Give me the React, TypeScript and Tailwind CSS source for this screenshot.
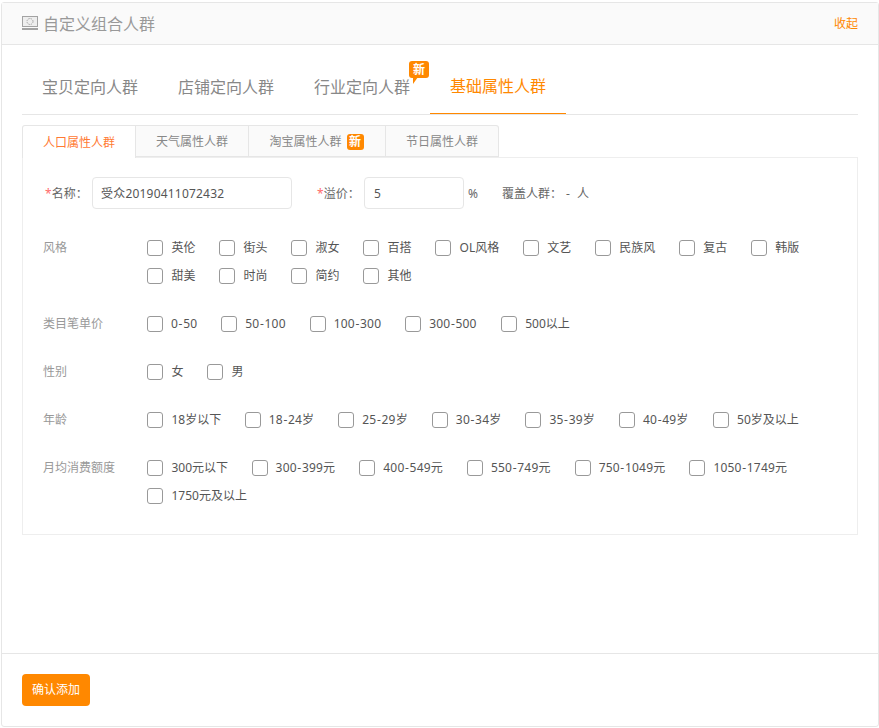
const mainTabs = ['宝贝定向人群', '店铺定向人群', '行业定向人群', '基础属性人群'];

const groups = [
  { label: '风格', mt: 'mt-[25px]', options: ['英伦', '街头', '淑女', '百搭', 'OL风格', '文艺', '民族风', '复古', '韩版', '甜美', '时尚', '简约', '其他'] },
  { label: '类目笔单价', mt: 'mt-[20px]', options: ['0-50', '50-100', '100-300', '300-500', '500以上'] },
  { label: '性别', mt: 'mt-[20px]', options: ['女', '男'] },
  { label: '年龄', mt: 'mt-[20px]', options: ['18岁以下', '18-24岁', '25-29岁', '30-34岁', '35-39岁', '40-49岁', '50岁及以上'] },
  { label: '月均消费额度', mt: 'mt-[20px]', options: ['300元以下', '300-399元', '400-549元', '550-749元', '750-1049元', '1050-1749元', '1750元及以上'] },
];

function Option({ text }: { text: string }) {
  const parts = text.split('-');
  return (
    <label className="flex items-center h-[28px] mr-[24px]">
      <span className="w-[16px] h-[16px] rounded-[3px] border border-[#999] bg-white" />
      {parts.length > 1 ? (
        <span className="ml-[8px] text-[12px] text-[#555] tracking-[0.2px]">
          {parts[0]}<span className="px-[0.5px]">-</span>{parts[1]}
        </span>
      ) : (
        <span className="ml-[8.5px] mr-[-0.5px] text-[12px] text-[#555]">{text}</span>
      )}
    </label>
  );
}

export default function App() {
  return (
    <div className="w-[879px] h-[728px] pt-[2px] pl-[1px] bg-white text-[#666]" style={{ fontFamily: '"Noto Sans", "Noto Sans CJK SC", sans-serif' }}>
      <div className="w-[878px] h-[725px] flex flex-col border border-[#e6e6e6] rounded-[3px]">
        <div className="h-[41px] flex items-center justify-between px-[20px] bg-[#fafafa] border-b border-[#e6e6e6] box-content">
          <div className="flex items-center">
            <svg width="17" height="17" viewBox="0 0 17 17" fill="none" stroke="#a3a3a3" strokeWidth="1">
              <rect x="0.5" y="1.5" width="15" height="10" fill="#eeeeee" />
              <circle cx="8" cy="6.5" r="3" strokeDasharray="1.4 1" />
              <path d="M0 14h16" strokeWidth="2" />
            </svg>
            <span className="ml-[4px] text-[16px] text-[#999]">自定义组合人群</span>
          </div>
          <span className="text-[12px] text-[#ff8800]">收起</span>
        </div>

        <div className="flex-1 px-[20px]">
          <div className="h-[70px] flex border-b border-[#e6e6e6]">
            {mainTabs.map((t, i) => (
              <div key={t} className={`relative w-[136px] pt-[14px] flex items-center justify-center text-[16px] ${i === 3 ? 'text-[#ff8800] border-b border-[#ff8800]' : 'text-[#888]'}`}>
                {t}
                {i === 2 && (
                  <span className="absolute top-[16px] right-[1px] flex">
                    <span className="w-[20px] h-[17px] rounded-[3px] bg-[#ff8800] text-white text-[12px] font-bold leading-[17px] text-center">新</span>
                    <span className="absolute left-[4px] top-[16px] w-0 h-0 border-t-[7px] border-t-[#ff8800] border-r-[5px] border-r-transparent" />
                  </span>
                )}
              </div>
            ))}
          </div>

          <div className="mt-[10px] flex h-[33px] relative z-10">
            <div className="w-[114px] h-[33px] pt-px flex items-center justify-center text-[12px] text-[#ff7a33] bg-white border border-b-0 border-[#e6e6e6] rounded-tl-[3px]">人口属性人群</div>
            <div className="w-[113px] h-[32px] pt-px flex items-center justify-center text-[12px] text-[#888] bg-[#fafafa] border-t border-r border-b border-[#e6e6e6]">天气属性人群</div>
            <div className="w-[137px] h-[32px] pt-px pr-px flex items-center justify-center text-[12px] text-[#888] bg-[#fafafa] border-t border-r border-b border-[#e6e6e6]">
              淘宝属性人群
              <span className="ml-[5px] w-[17px] h-[16px] rounded-[3px] bg-[#ff8800] text-white text-[12px] font-bold leading-[16px] text-center">新</span>
            </div>
            <div className="w-[113px] h-[32px] pt-px flex items-center justify-center text-[12px] text-[#888] bg-[#fafafa] border-t border-r border-b border-[#e6e6e6] rounded-tr-[3px]">节日属性人群</div>
          </div>

          <div className="h-[378px] -mt-px border border-[#eeeeee] px-[20px] pt-[19px]">
            <div className="flex items-center h-[32px] text-[12px]">
              <span className="ml-[2px] w-[47px] pt-[2px] text-[#666]"><span className="text-[#ff6a6a]">*</span>名称：</span>
              <div className="w-[200px] h-[32px] pt-[2px] flex items-center pl-[8px] border border-[#e6e6e6] rounded-[4px] text-[#555] tracking-[0.2px]">受众20190411072432</div>
              <span className="ml-[25px] w-[47px] pt-[2px] text-[#666]"><span className="text-[#ff6a6a]">*</span>溢价：</span>
              <div className="w-[100px] h-[32px] pt-[2px] flex items-center pl-[9px] border border-[#e6e6e6] rounded-[4px] text-[#555]">5</div>
              <span className="ml-[4px] pt-[2px] text-[#666]">%</span>
              <span className="ml-[24px] pt-[2px] text-[#666]">覆盖人群：</span>
              <span className="ml-[3px] pt-[2px] text-[#666]"><span className="px-[1px]">-</span><span className="ml-[6px]">人</span></span>
            </div>

            {groups.map(g => (
              <div key={g.label} className={`flex ${g.mt}`}>
                <div className="w-[104px] shrink-0 h-[28px] leading-[28px] text-[12px] text-[#999]">{g.label}</div>
                <div className="flex flex-wrap w-[680px]">
                  {g.options.map(o => <Option key={o} text={o} />)}
                </div>
              </div>
            ))}
          </div>
        </div>

        <div className="h-[73px] flex items-center pl-[20px] border-t border-[#e6e6e6]">
          <button className="w-[68px] h-[32px] rounded-[4px] bg-[#ff8800] text-white text-[12px]">确认添加</button>
        </div>
      </div>
    </div>
  );
}
